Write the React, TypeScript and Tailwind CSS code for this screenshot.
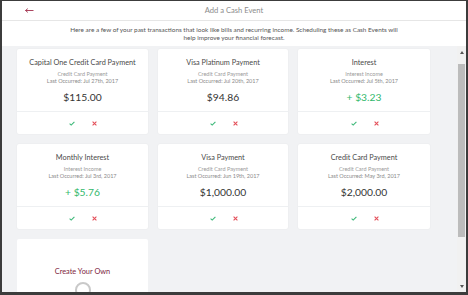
import React from "react";

type Card = {
  title: string;
  sub: string;
  date: string;
  amount: string;
  income?: boolean;
};

const cards: Card[] = [
  { title: "Capital One Credit Card Payment", sub: "Credit Card Payment", date: "Last Occurred: Jul 27th, 2017", amount: "$115.00" },
  { title: "Visa Platinum Payment", sub: "Credit Card Payment", date: "Last Occurred: Jul 20th, 2017", amount: "$94.86" },
  { title: "Interest", sub: "Interest Income", date: "Last Occurred: Jul 5th, 2017", amount: "+ $3.23", income: true },
  { title: "Monthly Interest", sub: "Interest Income", date: "Last Occurred: Jul 3rd, 2017", amount: "+ $5.76", income: true },
  { title: "Visa Payment", sub: "Credit Card Payment", date: "Last Occurred: Jun 19th, 2017", amount: "$1,000.00" },
  { title: "Credit Card Payment", sub: "Credit Card Payment", date: "Last Occurred: May 3rd, 2017", amount: "$2,000.00" },
];

function Check() {
  return (
    <svg width="6" height="5" viewBox="0 0 6 5">
      <polyline points="0.6,2.6 2.2,4.1 5.4,0.8" fill="none" stroke="#3cb878" strokeWidth="1.1" />
    </svg>
  );
}

function Cross() {
  return (
    <svg width="5" height="5" viewBox="0 0 5 5">
      <path d="M0.6 0.6 L4.4 4.4 M4.4 0.6 L0.6 4.4" stroke="#e4505a" strokeWidth="1.1" />
    </svg>
  );
}

function EventCard({ c }: { c: Card }) {
  return (
    <div className="h-[85px] bg-white rounded-[2px] shadow-[0_0_2px_rgba(0,0,0,0.06)] flex flex-col">
      <div className="h-[62px] flex flex-col items-center">
        <div className="pt-[9px] text-[7.3px] leading-[10px] text-[#4a4a4a] whitespace-nowrap">{c.title}</div>
        <div className="mt-[3px] text-[5.5px] leading-[7px] text-[#9a9a9a] whitespace-nowrap">{c.sub}</div>
        <div className="text-[5.5px] leading-[7px] text-[#8a8a8a] whitespace-nowrap">{c.date}</div>
        <div
          className={
            "mt-[6px] text-[10.3px] leading-[13px] whitespace-nowrap " +
            (c.income ? "text-[#32b86c]" : "text-[#333333]")
          }
        >
          {c.amount}
        </div>
      </div>
      <div className="h-[23px] border-t border-[#eef0f2] flex items-center justify-center gap-[17px] pl-[1px]">
        <Check />
        <Cross />
      </div>
    </div>
  );
}

export default function App() {
  return (
    <div
      className="w-[468px] h-[295px] bg-[#3c3c3c] pl-[2px] pr-[2px] pt-[1px] pb-[3px] flex"
      style={{ fontFamily: "Lato, 'Liberation Sans', sans-serif" }}
    >
      <div className="flex-1 min-h-0 flex flex-col bg-white overflow-hidden">
        <div className="h-[20px] shrink-0 border-b border-[#e6e6e6] flex items-center relative">
          <div className="absolute left-[23px] top-[7px]">
            <svg width="9" height="5" viewBox="0 0 9 5">
              <path d="M0.5 2.5 H8.5 M0.5 2.5 L2.8 0.6 M0.5 2.5 L2.8 4.4" stroke="#a2304d" strokeWidth="0.9" fill="none" />
            </svg>
          </div>
          <div className="flex-1 text-center text-[7.6px] text-[#8c8c8c]">Add a Cash Event</div>
        </div>
        <div className="h-[25px] shrink-0 flex flex-col items-center pt-[5px] text-[6.4px] leading-[8px] text-[#555555]">
          <div className="whitespace-nowrap">Here are a few of your past transactions that look like bills and recurring income. Scheduling these as Cash Events will</div>
          <div className="whitespace-nowrap">help improve your financial forecast.</div>
        </div>
        <div className="flex-1 min-h-0 flex bg-[#f1f2f4] overflow-hidden">
          <div className="flex-1 min-h-0 overflow-hidden pl-[15px] pt-[3px]">
            <div className="grid grid-cols-[131px_130px_132px] gap-x-[10px] gap-y-[10px]">
              {cards.map((c) => (
                <EventCard key={c.title + c.amount} c={c} />
              ))}
              <div className="h-[85px] bg-white rounded-[2px] flex flex-col items-center overflow-hidden">
                <div className="pt-[28px] text-[7.4px] leading-[10px] text-[#7e2640] whitespace-nowrap">Create Your Own</div>
                <div className="mt-[5px] w-[16px] h-[16px] rounded-full border-[2px] border-[#c9c9c9]" />
              </div>
            </div>
          </div>
          <div className="w-[9px] bg-[#f1f1f1] flex flex-col items-center">
            <div className="h-[12px] flex items-center justify-center">
              <div className="w-0 h-0 border-l-[2.5px] border-r-[2.5px] border-b-[3px] border-l-transparent border-r-transparent border-b-[#555]" />
            </div>
            <div className="w-[7px] h-[173px] mt-[6px] bg-[#bcbcbc]" />
            <div className="flex-1" />
            <div className="h-[12px] flex items-center justify-center">
              <div className="w-0 h-0 border-l-[2.5px] border-r-[2.5px] border-t-[3px] border-l-transparent border-r-transparent border-t-[#555]" />
            </div>
          </div>
        </div>
      </div>
    </div>
  );
}
